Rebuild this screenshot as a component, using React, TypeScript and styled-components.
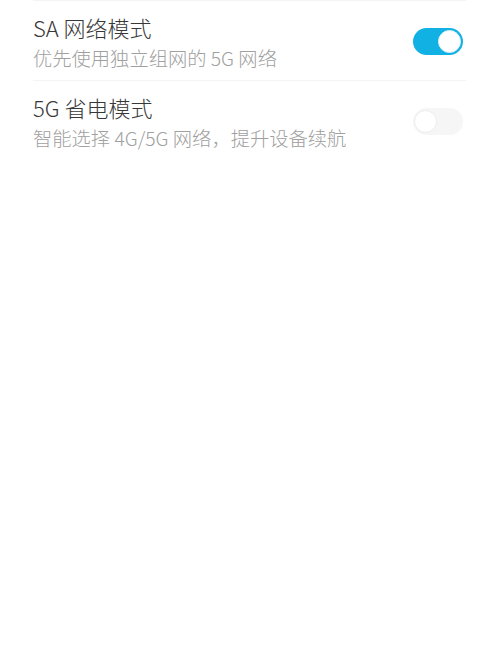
import styled, { createGlobalStyle } from "styled-components";
import { useState } from "react";

const GlobalStyle = createGlobalStyle`
    body{
        margin:0;
        background:#ffffff;
        font-family:"Noto Sans CJK SC","Noto Sans",sans-serif;
    }
`;

const List = styled.div`
    display:flex;
    flex-direction:column;
    padding:0 34px 0 33px;
`;

const Row = styled.div`
    display:flex;
    align-items:center;
    justify-content:space-between;
    height:80px;
    box-sizing:border-box;
    border-top:1px solid #f4f4f4;
`;

const Texts = styled.div`
    display:flex;
    flex-direction:column;
    gap:3px;
    margin-top:1px;
`;

const Title = styled.span`
    font-size:22px;
    line-height:30px;
    font-weight:300;
    color:#383838;
`;

const Desc = styled.span`
    font-size:19.3px;
    line-height:26px;
    font-weight:300;
    color:#a0a0a0;
`;

const Track = styled.button<{ $on: boolean }>`
    position:relative;
    width:50px;
    height:27px;
    border:none;
    padding:0;
    margin-right:3px;
    border-radius:14px;
    background:${p => p.$on ? "#12b1e3" : "#f6f6f6"};
    cursor:pointer;
    flex-shrink:0;
    margin-top:2px;
`;

const Knob = styled.span<{ $on: boolean }>`
    position:absolute;
    top:2px;
    left:${p => p.$on ? "25px" : "1px"};
    width:23px;
    height:23px;
    box-sizing:border-box;
    border-radius:50%;
    background:#ffffff;
    border:1px solid ${p => p.$on ? "#d8f0f8" : "#ececec"};
`;

interface Item {
    id: number;
    title: string;
    desc: string;
    on: boolean;
}

const initial: Item[] = [
    { id: 1, title: "SA 网络模式", desc: "优先使用独立组网的 5G 网络", on: true },
    { id: 2, title: "5G 省电模式", desc: "智能选择 4G/5G 网络，提升设备续航", on: false },
];

function App() {
    const [items, setItems] = useState(initial);
    const toggle = (id: number) => {
        setItems(old => old.map(a => a.id === id ? { ...a, on: !a.on } : a));
    };
    return (
        <>
            <GlobalStyle />
            <List>
                {items.map(a => (
                    <Row key={a.id}>
                        <Texts>
                            <Title>{a.title}</Title>
                            <Desc>{a.desc}</Desc>
                        </Texts>
                        <Track $on={a.on} onClick={() => toggle(a.id)}>
                            <Knob $on={a.on} />
                        </Track>
                    </Row>
                ))}
            </List>
        </>
    );
}

export default App;
